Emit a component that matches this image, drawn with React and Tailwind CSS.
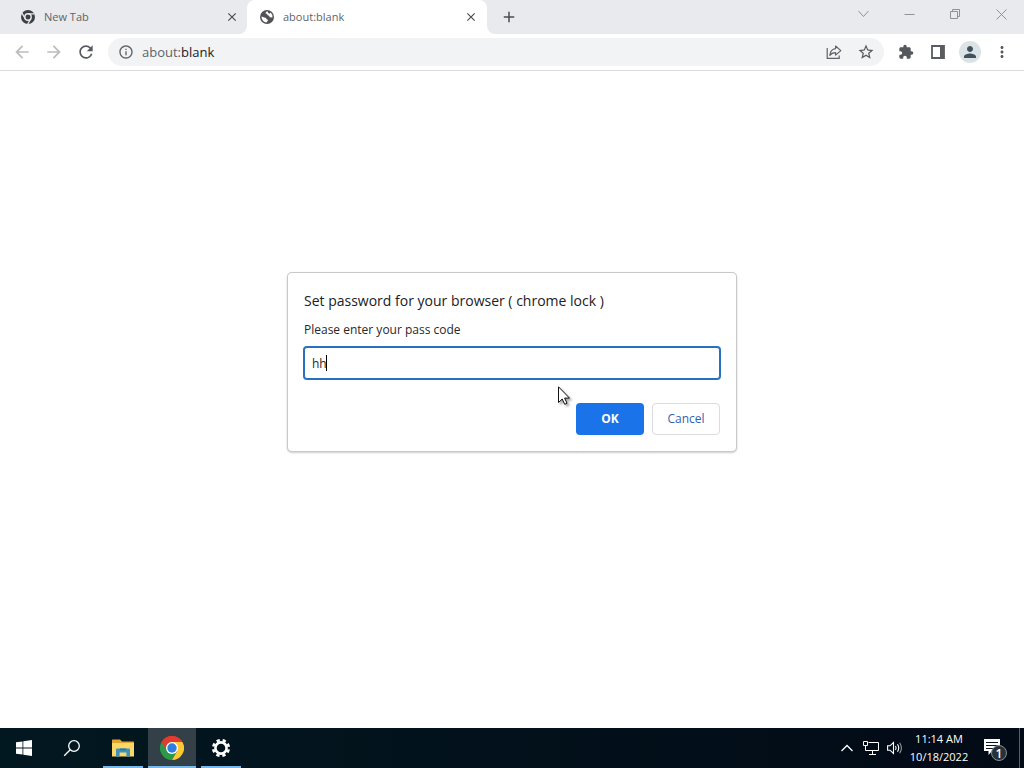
import React, { useState } from 'react';
import {
  MdAdd,
  MdArrowBack,
  MdArrowForward,
  MdClose,
  MdExtension,
  MdInfoOutline,
  MdMoreVert,
  MdPerson,
  MdRefresh,
  MdStarBorder,
} from 'react-icons/md';

const ChromeMono = () => (
  <svg viewBox="0 0 16 16" className="w-4 h-4 shrink-0">
    <circle cx="8" cy="8" r="7" fill="#3c4043" />
    <circle cx="8" cy="8" r="3.2" fill="none" stroke="#e8eaed" strokeWidth="1.4" />
    <path d="M8 4.8h6.4M5.2 9.6L2 4.2M10.8 9.6l-3.2 5.6" stroke="#e8eaed" strokeWidth="1.3" fill="none" />
  </svg>
);

const GlobeGlyph = () => (
  <svg viewBox="0 0 16 16" className="w-4 h-4 shrink-0">
    <circle cx="8" cy="8" r="7" fill="#505256" />
    <path d="M8.600 2.300Q6.400 2.800 6.500 4.600Q8.500 4.400 8.600 6.200Q10.600 6.300 10.700 8.200L13.500 8.600Q13.700 5.200 11.600 3.400L10.400 4.800L9 3.800z" fill="#fff" />
    <path d="M2.400 7.400L5.500 8.400Q7.500 8.600 7.600 10.200L9.200 11L7.500 13.600Q3 13 2.400 7.400z" fill="#fff" />
  </svg>
);

const ChromeColor = () => (
  <svg viewBox="0 0 48 48" className="w-6 h-6">
    <path d="M24 24L3.2 12A24 24 0 0 1 44.8 12z" fill="#e33b2e" />
    <path d="M24 24L3.2 12A24 24 0 0 0 24 48L34.4 30z" fill="#2a9a48" />
    <path d="M24 12H44.8A24 24 0 0 1 24 48L34.4 30z" fill="#fcc934" />
    <path d="M3.2 12L13.6 30L24 24L24 12z" fill="#2a9a48" />
    <path d="M3.2 12A24 24 0 0 1 44.8 12H24A12 12 0 0 0 13.6 30z" fill="#e33b2e" />
    <circle cx="24" cy="24" r="12" fill="#fff" />
    <circle cx="24" cy="24" r="9.4" fill="#2f7de1" />
  </svg>
);

const WindowsLogo = () => (
  <svg viewBox="0 0 16 16" className="w-4 h-4" fill="#fff">
    <path d="M0 2.3l6.5-.9v6.2H0zM7.3 1.3L16 0v7.6H7.3zM0 8.4h6.5v6.2L0 13.7zM7.3 8.4H16V16l-8.7-1.3z" />
  </svg>
);

const SearchGlyph = () => (
  <svg viewBox="0 0 18 18" className="w-[18px] h-[18px]" fill="none" stroke="#fff" strokeWidth="1.3">
    <circle cx="11" cy="7" r="5.3" />
    <path d="M7.2 10.8L1.2 16.8" />
  </svg>
);

const ExplorerGlyph = () => (
  <svg viewBox="0 0 22 18" className="w-[22px] h-[18px]">
    <path d="M0 1.2Q0 .5.7.5H8l2 2H21.3q.7 0 .7.7V17H0z" fill="#e0a62f" />
    <path d="M0 4h22v13.5H0z" fill="#fbd768" />
    <path d="M4 17.5v-7q0-1 1-1h12q1 0 1 1v7h-3.6v-4H7.6v4z" fill="#3d93bd" />
    <path d="M8 9.5h6v1.8H8z" fill="#2d789f" />
  </svg>
);

const SettingsGlyph = () => (
  <svg viewBox="0 0 20 20" className="w-5 h-5" fill="none" stroke="#fff">
    <circle cx="10" cy="10" r="5.6" strokeWidth="2.6" />
    <circle cx="10" cy="10" r="7.8" strokeWidth="2.6" strokeDasharray="3.3 2.826" strokeDashoffset="-1.4" />
  </svg>
);

const ShareGlyph = () => (
  <svg viewBox="0 0 16 16" className="w-4 h-4" fill="none" stroke="#5f6368" strokeWidth="1.2" strokeLinejoin="round">
    <path d="M1.2 4v10.4h12v-3" />
    <path d="M9.600 2l5.200 4.600-5.200 4.500V8.600C7 8.600 5.200 9.400 3.800 11.400 4.200 7.500 6.300 5 9.600 4.600z" />
  </svg>
);

const SidePanelGlyph = () => (
  <svg viewBox="0 0 14 14" className="w-3.5 h-3.5">
    <path d="M1 1h12v12H1z" fill="#fff" stroke="#5a5c60" strokeWidth="1.8" />
    <path d="M9 1h4v12H9z" fill="#5a5c60" />
  </svg>
);

const windowButtons = [
  { label: 'Search tabs', path: 'M0.5 3L5.5 8.5L10.5 3' },
  { label: 'Minimize', path: 'M0.5 6.5H10.5' },
  { label: 'Restore', path: 'M0.5 3.5H7.5V10.5H0.5zM2.5 3.5V1.5H9.5V8.5H7.5' },
  { label: 'Close', path: 'M0.5 1.5L10.5 11.5M10.5 1.5L0.5 11.5' },
];

function Tab({ icon, title, active }) {
  return (
    <div
      className={
        active
          ? 'relative flex h-[34px] w-60 items-center rounded-t-lg bg-white pl-3 pr-2'
          : 'flex h-[34px] w-[239px] items-center pl-3 pr-[7px]'
      }
    >
      {active && (
        <>
          <svg viewBox="0 0 8 8" className="absolute -left-2 bottom-0 h-2 w-2" fill="#fff">
            <path d="M8 0A8 8 0 0 1 0 8H8z" />
          </svg>
          <svg viewBox="0 0 8 8" className="absolute -right-2 bottom-0 h-2 w-2" fill="#fff">
            <path d="M0 0A8 8 0 0 0 8 8H0z" />
          </svg>
        </>
      )}
      {icon}
      <span className="ml-2 flex-1 text-[11px] leading-4 text-[#5f6368]">{title}</span>
      <button aria-label={`Close ${title}`} className="flex h-4 w-4 items-center justify-center text-[#4a4c50]">
        <MdClose className="h-3.5 w-3.5" />
      </button>
    </div>
  );
}

function ToolButton({ label, children }) {
  return (
    <button aria-label={label} className="flex h-7 w-7 shrink-0 items-center justify-center text-[#55585c]">
      {children}
    </button>
  );
}

function TaskButton({ label, running, active, children }) {
  return (
    <button
      aria-label={label}
      className={
        active
          ? 'relative flex h-10 w-12 items-center justify-center bg-[#334047]'
          : 'relative flex h-10 w-12 items-center justify-center'
      }
    >
      {children}
      {running && (
        <span className={active ? 'absolute inset-x-0 bottom-0 h-0.5 bg-[#76b9ed]' : 'absolute inset-x-1 bottom-0 h-0.5 bg-[#76b9ed]'} />
      )}
    </button>
  );
}

function PasswordDialog() {
  const [value, setValue] = useState('hh');

  return (
    <div
      role="dialog"
      aria-labelledby="dialog-title"
      className="relative w-[448px] rounded bg-white px-4 pb-4 pt-[18px] shadow-[0_1px_3px_rgba(0,0,0,0.4)] ring-1 ring-[#c8c8c8]"
    >
      <h1 id="dialog-title" className="text-[14px] leading-5 text-[#202124]">
        Set password for your browser ( chrome lock )
      </h1>
      <label htmlFor="pass-code" className="mt-2 block text-[12px] leading-[22px] text-[#26282b]">
        Please enter your pass code
      </label>
      <div className="relative mt-1.5">
        <input
          id="pass-code"
          type="text"
          value={value}
          onChange={(e) => setValue(e.target.value)}
          className="block h-8 w-full rounded-[3px] border border-[#276fc0] bg-white px-[7px] text-[12px] text-[#26282b] caret-transparent outline-none ring-1 ring-[#276fc0]"
        />
        {/* Text caret */}
        <span className="absolute left-[22px] top-2 h-4 w-px bg-black" />
      </div>
      <div className="mt-6 flex justify-end gap-2">
        <button className="h-8 w-[68px] rounded bg-[#1a73e8] text-[12px] font-bold text-white">OK</button>
        <button className="h-8 w-[68px] rounded border border-[#dadce0] bg-white text-[12px] text-[#2f62b0]">
          Cancel
        </button>
      </div>
      {/* Mouse pointer */}
      <svg viewBox="0 0 12 19" className="absolute left-[270px] top-[113px] h-[19px] w-3 drop-shadow-[2px_2px_1px_rgba(0,0,0,0.35)]">
        <path d="M.5.8V16.500L4.200 13L6.700 18.300L9 17.200L6.600 12.100H11.500z" fill="#fff" stroke="#111" strokeWidth="1" />
      </svg>
    </div>
  );
}

export default function App() {
  return (
    <div className="flex h-screen flex-col overflow-hidden bg-white font-['Open_Sans','Noto_Sans',sans-serif]">
      {/* Tab strip */}
      <div className="flex h-[34px] shrink-0 bg-[#e8eaed] pl-2">
        <Tab icon={<ChromeMono />} title="New Tab" />
        <Tab icon={<GlobeGlyph />} title="about:blank" active />
        <button aria-label="New tab" className="ml-2 flex h-[34px] w-7 items-center justify-center text-[#4a4c50]">
          <MdAdd className="h-[18px] w-[18px]" />
        </button>
        <div className="ml-auto flex">
          {windowButtons.map((b) => (
            <button key={b.label} aria-label={b.label} className="flex h-7 w-[46px] items-center justify-center">
              <svg viewBox="0 0 11 12" className="h-3 w-[11px]" fill="none" stroke="#909296" strokeWidth="1">
                <path d={b.path} />
              </svg>
            </button>
          ))}
        </div>
      </div>

      {/* Toolbar */}
      <div className="flex h-[37px] shrink-0 items-center gap-1 border-b border-[#d9dbde] px-2">
        <button aria-label="Back" className="flex h-7 w-7 items-center justify-center text-[#babcbe]">
          <MdArrowBack className="h-5 w-5" />
        </button>
        <button aria-label="Forward" className="flex h-7 w-7 items-center justify-center text-[#babcbe]">
          <MdArrowForward className="h-5 w-5" />
        </button>
        <ToolButton label="Reload">
          <MdRefresh className="h-5 w-5" />
        </ToolButton>
        <div className="mx-1 flex h-7 min-w-0 flex-1 items-center rounded-full bg-[#f1f3f4] pl-2.5 pr-1">
          <MdInfoOutline className="h-4 w-4 shrink-0 text-[#5f6368]" />
          <div className="ml-2 flex-1 text-[13px] leading-5 text-[#5f6368]">
            about:<span className="text-[#202124]">blank</span>
          </div>
          <div className="flex gap-1">
            <ToolButton label="Share">
              <ShareGlyph />
            </ToolButton>
            <ToolButton label="Bookmark">
              <MdStarBorder className="h-[18px] w-[18px]" />
            </ToolButton>
          </div>
        </div>
        <ToolButton label="Extensions">
          <MdExtension className="h-4 w-4" />
        </ToolButton>
        <ToolButton label="Side panel">
          <SidePanelGlyph />
        </ToolButton>
        <ToolButton label="Profile">
          <span className="flex h-[22px] w-[22px] items-center justify-center rounded-full bg-[#dce3e7] text-[#42525c]">
            <MdPerson className="h-[18px] w-[18px]" />
          </span>
        </ToolButton>
        <ToolButton label="Menu">
          <MdMoreVert className="h-[18px] w-[18px]" />
        </ToolButton>
      </div>

      {/* Page */}
      <main className="flex flex-1 items-start justify-center pt-[202px]">
        <PasswordDialog />
      </main>

      {/* Taskbar */}
      <div className="flex h-10 shrink-0 items-center bg-linear-to-r from-[#021820] to-[#020a16] text-white">
        <TaskButton label="Start">
          <WindowsLogo />
        </TaskButton>
        <TaskButton label="Search">
          <SearchGlyph />
        </TaskButton>
        <div className="ml-[3px] flex gap-px">
          <TaskButton label="File Explorer" running>
            <ExplorerGlyph />
          </TaskButton>
          <TaskButton label="Chrome" running active>
            <ChromeColor />
          </TaskButton>
          <TaskButton label="Settings" running>
            <SettingsGlyph />
          </TaskButton>
        </div>
        <div className="ml-auto flex items-center">
          <button aria-label="Show hidden icons" className="flex h-10 w-6 items-center justify-center">
            <svg viewBox="0 0 12 8" className="h-2 w-3" fill="none" stroke="#fff" strokeWidth="1.3">
              <path d="M.5 7L6 1.5L11.5 7" />
            </svg>
          </button>
          <button aria-label="Network" className="flex h-10 w-6 items-center justify-center">
            <svg viewBox="0 0 18 16" className="h-4 w-[18px]" fill="none" stroke="#fff" strokeWidth="1">
              <path d="M6.500 2.500H16.500V10.500H3.500V7M10.500 10.500V14.500M7 14.500H14" />
              <path d="M1.500 1.500H5.500V5.500H1.500zM3.500 5.500V7" />
            </svg>
          </button>
          <button aria-label="Volume" className="flex h-10 w-6 items-center justify-center">
            <svg viewBox="0 0 16 14" className="h-3.5 w-4" fill="none" stroke="#fff" strokeWidth="1.1">
              <path d="M.6 4.800H3L6.500 1.500V12.500L3 9.200H.6z" />
              <path d="M8.500 5Q9.700 7 8.500 9M10.500 3.300Q13 7 10.500 10.700" />
              <path d="M12.600 1.800Q16.300 7 12.600 12.200" stroke="#8d959b" />
            </svg>
          </button>
          <button className="flex h-10 w-16 flex-col items-center justify-center whitespace-nowrap text-[11px] leading-[18px]">
            <span>11:14 AM</span>
            <span>10/18/2022</span>
          </button>
          <button aria-label="Notifications" className="ml-2 flex h-10 w-8 items-center justify-center">
            <svg viewBox="0 0 26 26" className="h-[26px] w-[26px]">
              <path d="M2 4H18V16H10L6.500 20V16H2z" fill="#fff" />
              <path d="M4 7.500H16M4 10.500H16M4 13.500H13" stroke="#0a141d" strokeWidth="1" />
              <circle cx="17" cy="18" r="7.5" fill="#26323a" stroke="#849096" strokeWidth="1" />
              <text x="17" y="22.500" textAnchor="middle" fontSize="12" fontWeight="600" fill="#fff">1</text>
            </svg>
          </button>
          <button aria-label="Show desktop" className="ml-2 h-10 w-[5px] border-l border-[#56606a]" />
        </div>
      </div>
    </div>
  );
}
